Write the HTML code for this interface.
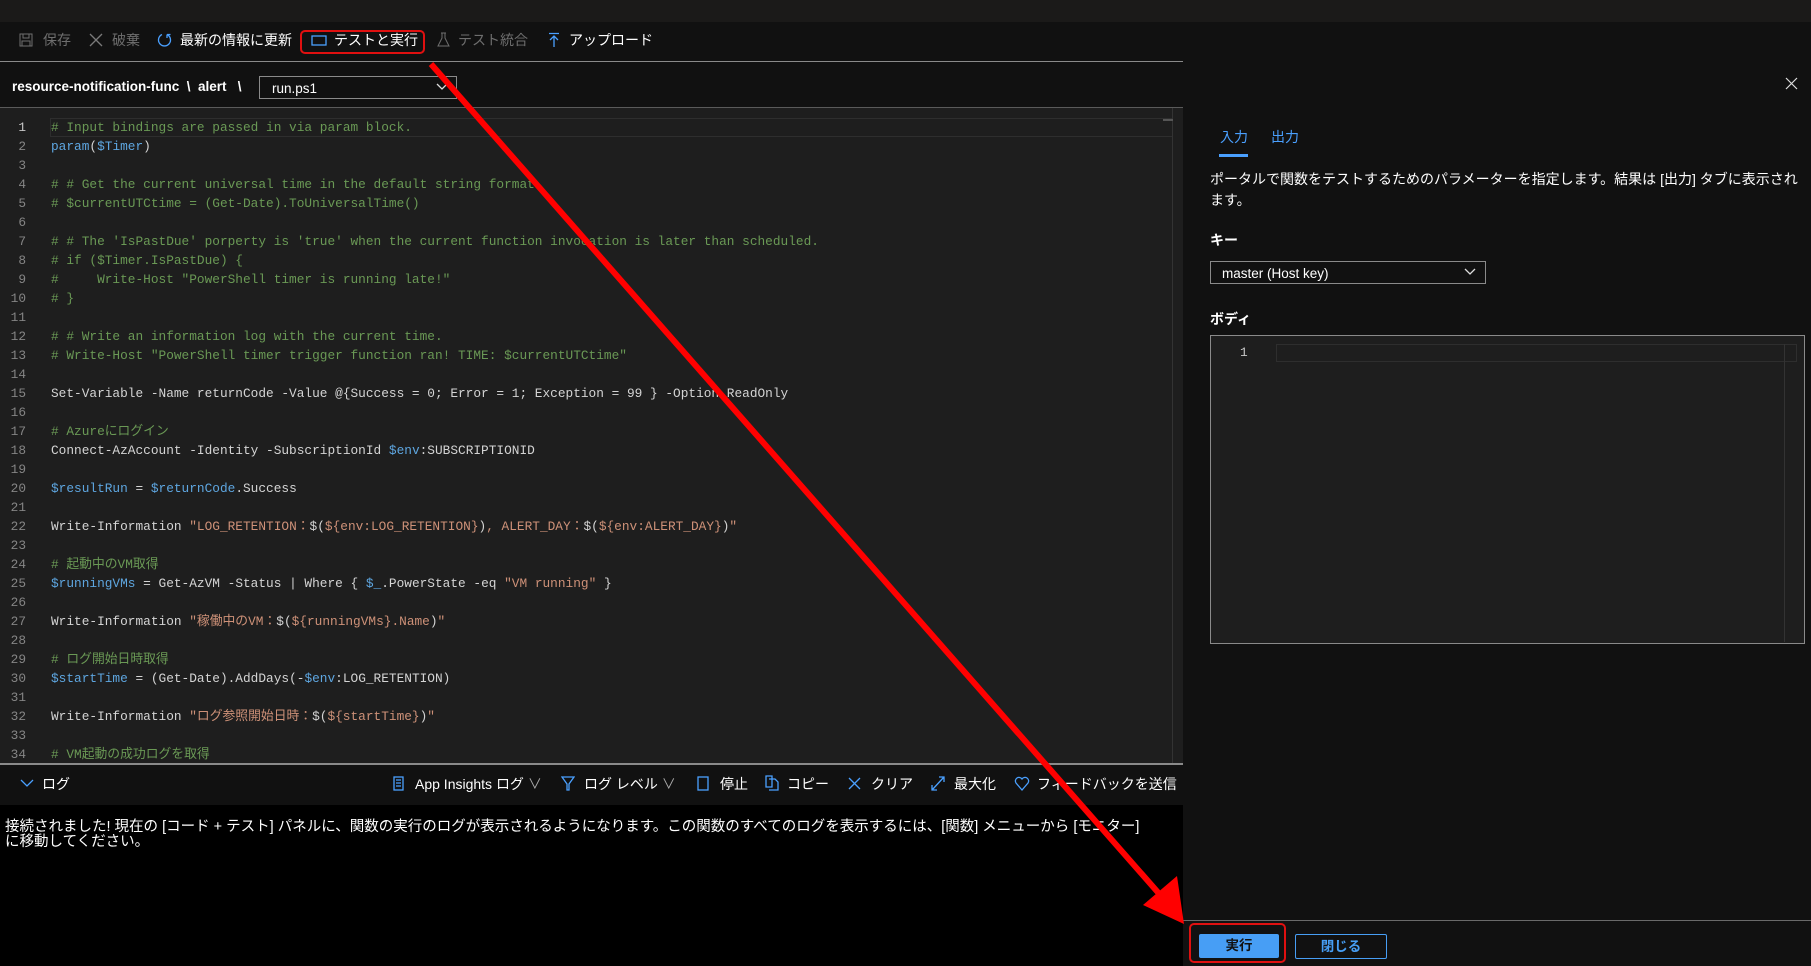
<!DOCTYPE html>
<html><head><meta charset="utf-8"><style>
*{margin:0;padding:0;box-sizing:border-box}
body{width:1811px;height:966px;overflow:hidden;background:#111;font-family:"Liberation Sans","Noto Sans CJK JP",sans-serif;color:#fff;position:relative}
.abs{position:absolute}
.tb{font-size:14px;top:31px;line-height:18px;white-space:nowrap}
.dis{color:#6e6e6e}
#code{position:absolute;left:0;top:108px;width:1183px;height:655px;background:#1e1e1e;overflow:hidden;font-family:"Liberation Mono","Noto Sans CJK JP",monospace;font-size:12.8px}
.ln{position:absolute;left:0;width:1183px;height:19px;line-height:19px;white-space:pre}
.ln b{font-weight:normal;position:absolute;left:6px;width:20px;text-align:right;color:#858585}
.ln span.c{position:absolute;left:51px;color:#d4d4d4}
.ln span.c.cm,.cm{color:#6a9955}.st{color:#ce9178}.v{color:#5ea6e0}
.icn{stroke:#4aa0ff;fill:none;stroke-width:1.3}
</style></head><body>
<div class="abs" style="left:0;top:0;width:1811px;height:22px;background:#1b1a19"></div>
<div class="abs" style="left:0;top:22px;width:1183px;height:40px;background:#111;border-bottom:1px solid #8a8a8a"></div>
<!-- toolbar -->
<svg class="abs" style="left:19px;top:33px" width="14" height="14"><rect x="1" y="1" width="12" height="12" fill="none" stroke="#6e6e6e"/><rect x="4" y="1" width="6" height="4" fill="none" stroke="#6e6e6e"/><rect x="3" y="8" width="8" height="5" fill="none" stroke="#6e6e6e"/></svg>
<div class="abs tb dis" style="left:43px">保存</div>
<svg class="abs" style="left:89px;top:33px" width="14" height="14"><path d="M1 1L13 13M13 1L1 13" stroke="#7a7a7a" stroke-width="1.3"/></svg>
<div class="abs tb dis" style="left:112px">破棄</div>
<svg class="abs" style="left:157px;top:32px" width="15" height="16"><path d="M5 2.5A6 6 0 1 0 10 2.5M10 2.5L10 6M10 2.5L13.5 2.5" class="icn"/></svg>
<div class="abs tb" style="left:180px">最新の情報に更新</div>
<div class="abs" style="left:300px;top:30px;width:125px;height:24px;border:2px solid #e01010;border-radius:5px"></div>
<svg class="abs" style="left:311px;top:35px" width="16" height="11"><rect x="1" y="1" width="14" height="9" class="icn"/></svg>
<div class="abs tb" style="left:334px">テストと実行</div>
<svg class="abs" style="left:437px;top:32px" width="13" height="16"><path d="M4 1H9M5 1V6L1 14H12L8 6V1" fill="none" stroke="#6e6e6e"/></svg>
<div class="abs tb dis" style="left:458px">テスト統合</div>
<svg class="abs" style="left:548px;top:32px" width="12" height="16"><path d="M1 1.5H11M6 4V15M2 8L6 4L10 8" class="icn"/></svg>
<div class="abs tb" style="left:569px">アップロード</div>
<!-- breadcrumb -->
<div class="abs" style="left:0;top:62px;width:1183px;height:46px;background:#111;border-bottom:1px solid #5a5a5a"></div>
<div class="abs" style="left:12px;top:79px;font-size:13.5px;font-weight:bold;white-space:nowrap">resource-notification-func&nbsp;&nbsp;\&nbsp;&nbsp;alert&nbsp;&nbsp;&nbsp;\</div>
<div class="abs" style="left:259px;top:76px;width:198px;height:23px;border:1px solid #8a8a8a;font-size:13.5px;padding:4px 0 0 12px">run.ps1</div>
<svg class="abs" style="left:436px;top:83px" width="12" height="8"><path d="M1 1L6 6L11 1" stroke="#ddd" fill="none" stroke-width="1.3"/></svg>
<!-- code -->
<div id="code">
<div class="abs" style="left:50px;top:10px;width:1123px;height:19px;border:1px solid #2e2e2e"></div>
<div class="abs" style="left:1172px;top:0;width:1px;height:655px;background:#333"></div>
<div class="abs" style="left:1163px;top:11px;width:10px;height:2px;background:#555"></div>
<div class="ln" style="top:10px"><b style="color:#c6c6c6">1</b><span class="c cm"># Input bindings are passed in via param block.</span></div>
<div class="ln" style="top:29px"><b>2</b><span class="c"><span class="v">param</span>(<span class="v">$Timer</span>)</span></div>
<div class="ln" style="top:48px"><b>3</b></div>
<div class="ln" style="top:67px"><b>4</b><span class="c cm"># # Get the current universal time in the default string format</span></div>
<div class="ln" style="top:86px"><b>5</b><span class="c cm"># $currentUTCtime = (Get-Date).ToUniversalTime()</span></div>
<div class="ln" style="top:105px"><b>6</b></div>
<div class="ln" style="top:124px"><b>7</b><span class="c cm"># # The 'IsPastDue' porperty is 'true' when the current function invocation is later than scheduled.</span></div>
<div class="ln" style="top:143px"><b>8</b><span class="c cm"># if ($Timer.IsPastDue) {</span></div>
<div class="ln" style="top:162px"><b>9</b><span class="c cm">#     Write-Host "PowerShell timer is running late!"</span></div>
<div class="ln" style="top:181px"><b>10</b><span class="c cm"># }</span></div>
<div class="ln" style="top:200px"><b>11</b></div>
<div class="ln" style="top:219px"><b>12</b><span class="c cm"># # Write an information log with the current time.</span></div>
<div class="ln" style="top:238px"><b>13</b><span class="c cm"># Write-Host "PowerShell timer trigger function ran! TIME: $currentUTCtime"</span></div>
<div class="ln" style="top:257px"><b>14</b></div>
<div class="ln" style="top:276px"><b>15</b><span class="c">Set-Variable -Name returnCode -Value @{Success = 0; Error = 1; Exception = 99 } -Option ReadOnly</span></div>
<div class="ln" style="top:295px"><b>16</b></div>
<div class="ln" style="top:314px"><b>17</b><span class="c cm"># Azureにログイン</span></div>
<div class="ln" style="top:333px"><b>18</b><span class="c">Connect-AzAccount -Identity -SubscriptionId <span class="v">$env</span>:SUBSCRIPTIONID</span></div>
<div class="ln" style="top:352px"><b>19</b></div>
<div class="ln" style="top:371px"><b>20</b><span class="c"><span class="v">$resultRun</span> = <span class="v">$returnCode</span>.Success</span></div>
<div class="ln" style="top:390px"><b>21</b></div>
<div class="ln" style="top:409px"><b>22</b><span class="c">Write-Information <span class="st">"LOG_RETENTION：</span>$(<span class="st">${env:LOG_RETENTION}</span>)<span class="st">, ALERT_DAY：</span>$(<span class="st">${env:ALERT_DAY}</span>)<span class="st">"</span></span></div>
<div class="ln" style="top:428px"><b>23</b></div>
<div class="ln" style="top:447px"><b>24</b><span class="c cm"># 起動中のVM取得</span></div>
<div class="ln" style="top:466px"><b>25</b><span class="c"><span class="v">$runningVMs</span> = Get-AzVM -Status | Where { <span class="v">$_</span>.PowerState -eq <span class="st">"VM running"</span> }</span></div>
<div class="ln" style="top:485px"><b>26</b></div>
<div class="ln" style="top:504px"><b>27</b><span class="c">Write-Information <span class="st">"稼働中のVM：</span>$(<span class="st">${runningVMs}.Name</span>)<span class="st">"</span></span></div>
<div class="ln" style="top:523px"><b>28</b></div>
<div class="ln" style="top:542px"><b>29</b><span class="c cm"># ログ開始日時取得</span></div>
<div class="ln" style="top:561px"><b>30</b><span class="c"><span class="v">$startTime</span> = (Get-Date).AddDays(-<span class="v">$env</span>:LOG_RETENTION)</span></div>
<div class="ln" style="top:580px"><b>31</b></div>
<div class="ln" style="top:599px"><b>32</b><span class="c">Write-Information <span class="st">"ログ参照開始日時：</span>$(<span class="st">${startTime}</span>)<span class="st">"</span></span></div>
<div class="ln" style="top:618px"><b>33</b></div>
<div class="ln" style="top:637px"><b>34</b><span class="c cm"># VM起動の成功ログを取得</span></div>
</div>
<!-- log header -->
<div class="abs" style="left:0;top:763px;width:1183px;height:42px;background:#111;border-top:2px solid #8a8a8a"></div>
<svg class="abs" style="left:20px;top:779px" width="14" height="9"><path d="M1 1L7 7L13 1" class="icn"/></svg>
<div class="abs tb" style="left:42px;top:775px">ログ</div>
<svg class="abs" style="left:393px;top:776px" width="11" height="15"><rect x="1" y="1" width="9" height="13" class="icn"/><path d="M3 4H8M3 7H8M3 10H8" class="icn"/></svg>
<div class="abs tb" style="left:415px;top:775px">App Insights ログ <span style="color:#aaa">∨</span></div>
<svg class="abs" style="left:561px;top:776px" width="14" height="15"><path d="M1 1H13L8 8V14L6 14V8Z" class="icn"/></svg>
<div class="abs tb" style="left:584px;top:775px">ログ レベル <span style="color:#aaa">∨</span></div>
<svg class="abs" style="left:697px;top:776px" width="12" height="15"><rect x="1" y="1" width="10" height="13" class="icn"/></svg>
<div class="abs tb" style="left:720px;top:775px">停止</div>
<svg class="abs" style="left:765px;top:775px" width="14" height="16"><path d="M1 1H7L7 12H1Z M4 4H10L13 7V15H4" class="icn"/></svg>
<div class="abs tb" style="left:787px;top:775px">コピー</div>
<svg class="abs" style="left:848px;top:777px" width="13" height="13"><path d="M1 1L12 12M12 1L1 12" class="icn"/></svg>
<div class="abs tb" style="left:871px;top:775px">クリア</div>
<svg class="abs" style="left:931px;top:776px" width="14" height="15"><path d="M1 14L13 1M1 9V14H6M8 1H13V6" class="icn"/></svg>
<div class="abs tb" style="left:954px;top:775px">最大化</div>
<svg class="abs" style="left:1014px;top:776px" width="16" height="15"><path d="M8 14L2 7A3.2 3.2 0 0 1 8 3A3.2 3.2 0 0 1 14 7Z" class="icn"/></svg>
<div class="abs tb" style="left:1037px;top:775px">フィードバックを送信</div>
<!-- log content -->
<div class="abs" style="left:0;top:805px;width:1183px;height:161px;background:#000"></div>
<div class="abs" style="left:5px;top:820px;width:1178px;font-size:14.5px;line-height:15px;color:#fff;white-space:nowrap">接続されました! 現在の [コード + テスト] パネルに、関数の実行のログが表示されるようになります。この関数のすべてのログを表示するには、[関数] メニューから [モニター]<br>に移動してください。</div>
<!-- right panel -->
<div class="abs" style="left:1183px;top:22px;width:628px;height:944px;background:#111"></div>
<svg class="abs" style="left:1785px;top:77px" width="13" height="13"><path d="M1 1L12 12M12 1L1 12" stroke="#ddd" stroke-width="1.2"/></svg>
<div class="abs" style="left:1220px;top:127px;font-size:14px;color:#4aa0ff">入力</div>
<div class="abs" style="left:1271px;top:127px;font-size:14px;color:#4aa0ff">出力</div>
<div class="abs" style="left:1219px;top:154px;width:29px;height:3px;background:#4aa0ff"></div>
<div class="abs" style="left:1210px;top:169px;width:600px;font-size:14px;line-height:21px">ポータルで関数をテストするためのパラメーターを指定します。結果は [出力] タブに表示されます。</div>
<div class="abs" style="left:1210px;top:230px;font-size:14px;font-weight:bold">キー</div>
<div class="abs" style="left:1210px;top:261px;width:276px;height:23px;border:1px solid #8a8a8a;font-size:13.5px;padding:4px 0 0 11px">master (Host key)</div>
<svg class="abs" style="left:1464px;top:268px" width="12" height="8"><path d="M1 1L6 6L11 1" stroke="#ddd" fill="none" stroke-width="1.3"/></svg>
<div class="abs" style="left:1210px;top:309px;font-size:14px;font-weight:bold">ボディ</div>
<div class="abs" style="left:1210px;top:335px;width:595px;height:309px;border:1px solid #8a8a8a;background:#1e1e1e"></div>
<div class="abs" style="left:1276px;top:344px;width:521px;height:18px;border:1px solid #2e2e2e"></div>
<div class="abs" style="left:1784px;top:344px;width:1px;height:298px;background:#333"></div>
<div class="abs" style="left:1240px;top:345px;font-family:'Liberation Mono',monospace;font-size:12.8px;color:#c6c6c6">1</div>
<div class="abs" style="left:1183px;top:920px;width:628px;height:1px;background:#6a6a6a"></div>
<div class="abs" style="left:1189px;top:923px;width:97px;height:40px;border:2px solid #e01010;border-radius:5px"></div>
<div class="abs" style="left:1199px;top:934px;width:80px;height:24px;background:#479ef5;border-radius:2px;color:#111;font-size:13.5px;font-weight:bold;text-align:center;line-height:24px">実行</div>
<div class="abs" style="left:1295px;top:934px;width:92px;height:25px;border:1px solid #479ef5;border-radius:2px;color:#479ef5;font-size:13.5px;font-weight:bold;text-align:center;line-height:23px">閉じる</div>
<!-- arrow -->
<svg class="abs" style="left:0;top:0" width="1811" height="966"><line x1="431" y1="64" x2="1162" y2="897" stroke="#ff0000" stroke-width="6"/><polygon points="1184,924 1143,905 1177,876" fill="#ff0000"/></svg>
</body></html>
